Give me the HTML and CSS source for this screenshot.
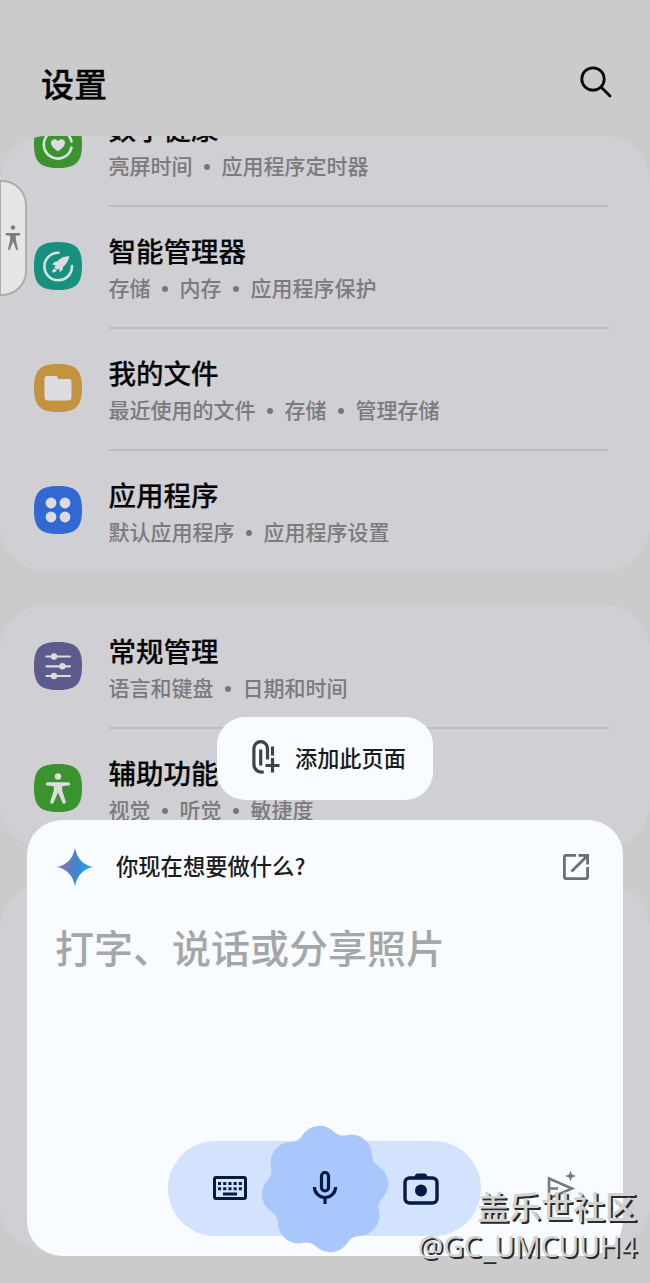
FILE: index.html
```html
<!DOCTYPE html>
<html lang="zh-CN">
<head>
    <meta charset="UTF-8">
    <meta name="viewport" content="width=device-width, initial-scale=1.0">
    <title>设置</title>
    <link rel="stylesheet" href="styles.css">
</head>
<body>
<div class="screen">

    <header class="header">
        <h1>设置</h1>
        <svg class="search" width="32" height="32" viewBox="0 0 32 32">
            <circle cx="13" cy="13" r="11.2"/>
            <path d="M21 21l9 9"/>
        </svg>
    </header>

    <main class="list">
        <section class="card card-scrolled">
            <div class="row">
                <svg class="icon" viewBox="0 0 48 48">
                    <path fill="#3a932f" d="M0 24C0 6 6 0 24 0s24 6 24 24-6 24-24 24S0 42 0 24z"/>
                    <path class="line" d="M37.500 27.500a14 14 0 1 1 0-6"/>
                    <path class="light" d="M24 31.500c-4-3-7-5.500-7-8.700 0-4 5-5 7-1.600 2-3.400 7-2.400 7 1.600 0 3.200-3 5.700-7 8.700z"/>
                </svg>
                <div class="text">
                    <div class="title">数字健康</div>
                    <div class="sub"><span>亮屏时间</span><span>应用程序定时器</span></div>
                </div>
            </div>
            <div class="row">
                <svg class="icon" viewBox="0 0 48 48">
                    <path fill="#17907f" d="M0 24C0 6 6 0 24 0s24 6 24 24-6 24-24 24S0 42 0 24z"/>
                    <path class="line" d="M24.500 10.700A13.800 13.800 0 1 0 38 24"/>
                    <path class="light" d="M35.500 14c-5.500.2-9.500 2.300-12.300 5.500-2.200-.2-4 1-5 3.300l3.300.2-1 2.500 2.200 2.200 2.500-1 .6 3.500c2.200-1.200 3.300-2.900 3.200-5.200 3.700-3 5.500-6.500 6.500-11zM20.500 26.500c-1.600.3-2.200 1.700-2.200 3.900 2.400 0 4-.7 4.500-2z"/>
                </svg>
                <div class="text">
                    <div class="title">智能管理器</div>
                    <div class="sub"><span>存储</span><span>内存</span><span>应用程序保护</span></div>
                </div>
            </div>
            <div class="row">
                <svg class="icon" viewBox="0 0 48 48">
                    <path fill="#c29440" d="M0 24C0 6 6 0 24 0s24 6 24 24-6 24-24 24S0 42 0 24z"/>
                    <path class="light" d="M10.500 14.500q0-2.500 2.500-2.500h8.500q1.500 0 2 1.300l.6 1.700H35q2.500 0 2.500 2.500V33q0 3.500-3.500 3.500H14q-3.500 0-3.500-3.500z"/>
                </svg>
                <div class="text">
                    <div class="title">我的文件</div>
                    <div class="sub"><span>最近使用的文件</span><span>存储</span><span>管理存储</span></div>
                </div>
            </div>
            <div class="row">
                <svg class="icon" viewBox="0 0 48 48">
                    <path fill="#3168d2" d="M0 24C0 6 6 0 24 0s24 6 24 24-6 24-24 24S0 42 0 24z"/>
                    <g class="light">
                        <circle cx="17" cy="17" r="5.400"/><circle cx="31" cy="17" r="5.400"/>
                        <circle cx="17" cy="31" r="5.400"/><circle cx="31" cy="31" r="5.400"/>
                    </g>
                </svg>
                <div class="text">
                    <div class="title">应用程序</div>
                    <div class="sub"><span>默认应用程序</span><span>应用程序设置</span></div>
                </div>
            </div>
        </section>

        <section class="card">
            <div class="row">
                <svg class="icon" viewBox="0 0 48 48">
                    <path fill="#5b5b8c" d="M0 24C0 6 6 0 24 0s24 6 24 24-6 24-24 24S0 42 0 24z"/>
                    <path class="line thin" d="M12.500 14.500h23.500M12.500 24.300h23.500M12.500 34h23.500"/>
                    <g class="light">
                        <circle cx="20" cy="14.500" r="3.200"/><circle cx="28.500" cy="24.300" r="3.200"/><circle cx="20" cy="34" r="3.200"/>
                    </g>
                </svg>
                <div class="text">
                    <div class="title">常规管理</div>
                    <div class="sub"><span>语言和键盘</span><span>日期和时间</span></div>
                </div>
            </div>
            <div class="row">
                <svg class="icon" viewBox="0 0 48 48">
                    <path fill="#3a932f" d="M0 24C0 6 6 0 24 0s24 6 24 24-6 24-24 24S0 42 0 24z"/>
                    <g class="light">
                        <circle cx="24" cy="12.500" r="3.200"/>
                        <path d="M13.500 18.300h21a1.600 1.600 0 0 1 0 3.300l-6.300.7v4.200l3.500 11a1.700 1.700 0 0 1-3.200 1.200L24 28.500l-4.500 10.200a1.700 1.700 0 0 1-3.200-1.200l3.500-11v-4.200l-6.300-.7a1.600 1.600 0 0 1 0-3.300z"/>
                    </g>
                </svg>
                <div class="text">
                    <div class="title">辅助功能</div>
                    <div class="sub"><span>视觉</span><span>听觉</span><span>敏捷度</span></div>
                </div>
            </div>
        </section>

        <section class="card card-empty"></section>
    </main>

    <div class="edge-handle">
        <svg width="16" height="26" viewBox="0 0 16 26">
            <circle cx="8" cy="2.500" r="2.200"/>
            <path d="M.8 8h14.400v2.200l-4.400.6v3.700l2.300 10.100-1.800.5L8 16.500l-3.300 8.600-1.800-.5 2.300-10.100v-3.700L.8 10.200z"/>
        </svg>
    </div>

    <button class="chip" type="button">
        <svg width="30" height="36" viewBox="0 0 30 36">
            <path d="M17.500 20.500V9.500a6.800 6.800 0 0 0-13.600 0v16a7.500 7.500 0 0 0 9.800 7.200M10.700 10.500v16M22.500 7.500v9M22.500 19v14.500M15.500 26.500h14"/>
        </svg>
        <span>添加此页面</span>
    </button>

    <section class="sheet">
        <div class="sheet-head">
            <svg width="38" height="40" viewBox="0 0 38 40">
                <defs>
                    <linearGradient id="spark" x1="0" y1="0.400" x2="1" y2="0.600">
                        <stop offset="0.100" stop-color="#9470b4"/>
                        <stop offset="0.500" stop-color="#4284c8"/>
                        <stop offset="0.750" stop-color="#2c98dc"/>
                        <stop offset="1" stop-color="#48a4d8"/>
                    </linearGradient>
                </defs>
                <path fill="url(#spark)" d="M19 .5C20.500 11 27.500 18.500 37.500 20 27.500 21.500 20.500 29 19 39.500 17.500 29 10.500 21.500.5 20 10.500 18.500 17.500 11 19 .5z"/>
            </svg>
            <span class="prompt">你现在想要做什么?</span>
            <svg class="open" width="26" height="26" viewBox="0 0 26 26">
                <path d="M13 1.400H3.200q-1.800 0-1.800 1.800v19.600q0 1.800 1.800 1.800h19.600q1.800 0 1.800-1.800V13M15.500 1.400h9.100v9.100M24.300 1.700L8.500 17.500"/>
            </svg>
        </div>
        <div class="placeholder">打字、说话或分享照片</div>

        <div class="tools">
            <div class="pill">
                <svg class="key" width="34" height="24" viewBox="0 0 34 24">
                    <rect x="1.500" y="1.500" width="31" height="21" rx="1.500"/>
                    <path d="M5 7.400h24M5 12.700h24" stroke-dasharray="3.100 2.100"/>
                    <path d="M10 18h14"/>
                </svg>
                <div class="mic">
                    <!-- eight lobes joined by shallow arcs -->
                    <svg class="blob" width="130" height="130" viewBox="-65 -65 130 130">
                        <path transform="rotate(-7)" d="M55.800-16
                            A20.500 20.500 0 0 1 55.800 16 A13.700 13.700 0 0 0 50.800 28.100
                            A20.500 20.500 0 0 1 28.100 50.800 A13.700 13.700 0 0 0 16 55.800
                            A20.500 20.500 0 0 1-16 55.800 A13.700 13.700 0 0 0-28.100 50.800
                            A20.500 20.500 0 0 1-50.800 28.100 A13.700 13.700 0 0 0-55.800 16
                            A20.500 20.500 0 0 1-55.800-16 A13.700 13.700 0 0 0-50.800-28.100
                            A20.500 20.500 0 0 1-28.100-50.800 A13.700 13.700 0 0 0-16-55.800
                            A20.500 20.500 0 0 1 16-55.800 A13.700 13.700 0 0 0 28.100-50.800
                            A20.500 20.500 0 0 1 50.800-28.100 A13.700 13.700 0 0 0 55.800-16z"/>
                    </svg>
                    <svg class="mic-icon" width="26" height="34" viewBox="0 0 26 34">
                        <rect x="9.500" y="1.500" width="7" height="18.500" rx="3.500"/>
                        <path d="M2.400 16a10.600 10.600 0 0 0 21.200 0M13 26.500V33"/>
                    </svg>
                </div>
                <svg class="cam" width="36" height="32" viewBox="0 0 36 32">
                    <rect x="2" y="5" width="32" height="25" rx="4.500"/>
                    <path d="M10.500 5l1.700-3q.7-1.500 2-1.500h7.600q1.300 0 2 1.500l1.700 3z"/>
                    <circle cx="18" cy="17.500" r="6"/>
                </svg>
            </div>
            <svg class="send" width="30" height="34" viewBox="0 0 30 34">
                <path class="plane" d="M2 8.500L25 18.500 2 28.500zM2 18.500h9"/>
                <path class="star" d="M23.500.5l1.400 4.100L29 6l-4.100 1.400-1.400 4.100-1.400-4.100L18 6l4.100-1.400z"/>
            </svg>
        </div>
    </section>

    <div class="watermark">
        <div class="wm-site">盖乐世社区</div>
        <div class="wm-user">@GC_UMCUUH4</div>
    </div>

</div>
</body>
</html>
```
FILE: styles.css
```css
body {
    margin: 0;
    font-family: "Noto Sans CJK SC", sans-serif;
}
.screen {
    position: relative;
    width: 650px;
    height: 1283px;
    overflow: hidden;
    background: #cbcbcb;
}

/* header */
.header {
    box-sizing: border-box;
    height: 136px;
    padding: 30px 38px 0 41px;
    display: flex;
    align-items: center;
    justify-content: space-between;
}
.header h1 {
    margin: 0;
    font-size: 33px;
    font-weight: 500;
    line-height: 48px;
    color: #050505;
    -webkit-text-stroke: 0.4px #050505;
}
.search {
    margin-top: -3px;
    fill: none;
    stroke: #080808;
    stroke-width: 2.8;
    stroke-linecap: round;
}

/* settings list */
.list {
    display: flex;
    flex-direction: column;
    gap: 34px;
}
.card {
    border-radius: 46px;
    background: #d0cfd4;
    overflow: hidden;
}
.card-scrolled {
    display: flex;
    flex-direction: column;
    justify-content: flex-end;
    height: 435px;
}
.card-empty {
    height: 367px;
}
.row {
    flex: none;
    box-sizing: border-box;
    height: 122px;
    padding-left: 33.5px;
    padding-right: 41px;
    display: flex;
    gap: 27px;
}
.icon {
    flex: none;
    width: 48px;
    height: 48px;
    margin-top: 36.5px;
}
.light {
    fill: #dcdce2;
}
.line {
    fill: none;
    stroke: #d5e3dc;
    stroke-width: 2.6;
    stroke-linecap: round;
}
.line.thin {
    stroke: #dcdce2;
    stroke-width: 2.2;
}
.text {
    flex: 1;
    padding-top: 27px;
}
.row + .row .text {
    padding-top: 25px;
    border-top: 2px solid #bebdc2;
}
.title {
    font-size: 27.5px;
    font-weight: 500;
    line-height: 37px;
    color: #060606;
    -webkit-text-stroke: 0.2px #060606;
}
.sub {
    display: flex;
    font-size: 21px;
    font-weight: 500;
    line-height: 36px;
    color: #7b7a7e;
}
.sub span + span::before {
    content: "";
    display: inline-block;
    width: 6px;
    height: 6px;
    margin: 0 12px 4px 11px;
    border-radius: 50%;
    background: #77767a;
}

/* floating parts */
.edge-handle {
    position: absolute;
    left: -1px;
    top: 180px;
    width: 24px;
    height: 112px;
    display: flex;
    align-items: center;
    justify-content: center;
    border: 2px solid #adadad;
    border-radius: 2px 25px 25px 2px;
    background: #e6e6e6;
}
.edge-handle svg {
    fill: #7d7d7d;
}
.chip {
    position: absolute;
    left: 217px;
    top: 717px;
    width: 216px;
    height: 83px;
    padding: 0 0 3px 33px;
    display: flex;
    align-items: center;
    gap: 15px;
    border: none;
    border-radius: 28px;
    background: #f8fbff;
    font-family: inherit;
    font-size: 22.2px;
    font-weight: 500;
    color: #1b1c1e;
}
.chip svg {
    fill: none;
    stroke: #3f4346;
    stroke-width: 3.2;
}
.sheet {
    position: absolute;
    left: 27px;
    top: 820px;
    box-sizing: border-box;
    width: 596px;
    height: 436px;
    padding: 27px 34px 20px 29px;
    display: flex;
    flex-direction: column;
    border-radius: 35px;
    background: #f8fbff;
}
.sheet-head {
    display: flex;
    align-items: center;
}
.prompt {
    flex: 1;
    margin-left: 22px;
    padding-bottom: 3px;
    font-size: 22.3px;
    font-weight: 500;
    line-height: 37px;
    color: #1b1c1e;
}
.open {
    fill: none;
    stroke: #6c6e70;
    stroke-width: 2.8;
}
.placeholder {
    margin-top: 30px;
    margin-left: -1px;
    font-size: 39px;
    font-weight: 500;
    line-height: 58px;
    color: #a4a7a9;
}
.tools {
    margin-top: auto;
    padding-left: 112px;
    display: flex;
    align-items: center;
}
.pill {
    flex: none;
    box-sizing: border-box;
    width: 313px;
    height: 95px;
    padding: 0 42px 0 45px;
    display: flex;
    align-items: center;
    justify-content: space-between;
    border-radius: 48px;
    background: #d4e3fd;
}
.key {
    margin-bottom: 1px;
    fill: none;
    stroke: #051a40;
    stroke-width: 3;
}
.mic {
    margin: 0 -20px;
    display: grid;
    place-items: center;
}
.mic svg {
    grid-area: 1 / 1;
}
.blob {
    margin: -20px 0;
    fill: #a9c7fc;
}
.mic-icon {
    margin-bottom: 2px;
    fill: none;
    stroke: #051a40;
    stroke-width: 3.2;
}
.cam rect {
    fill: none;
    stroke: #051a40;
    stroke-width: 3.4;
}
.cam path, .cam circle {
    fill: #051a40;
}
.send {
    margin-left: 66px;
    margin-bottom: 3px;
}
.plane {
    fill: none;
    stroke: #77797c;
    stroke-width: 2.6;
}
.star {
    fill: #77797c;
}
.watermark {
    position: absolute;
    right: 13px;
    top: 1185px;
    text-align: right;
    color: #d2d2d2;
    text-shadow: 2px 2px 0 #2b2b2b;
}
.wm-site {
    font-size: 32px;
    font-weight: 500;
    line-height: 40px;
}
.wm-user {
    font-family: "Noto Sans", sans-serif;
    font-size: 28.3px;
    line-height: 42px;
}
```
